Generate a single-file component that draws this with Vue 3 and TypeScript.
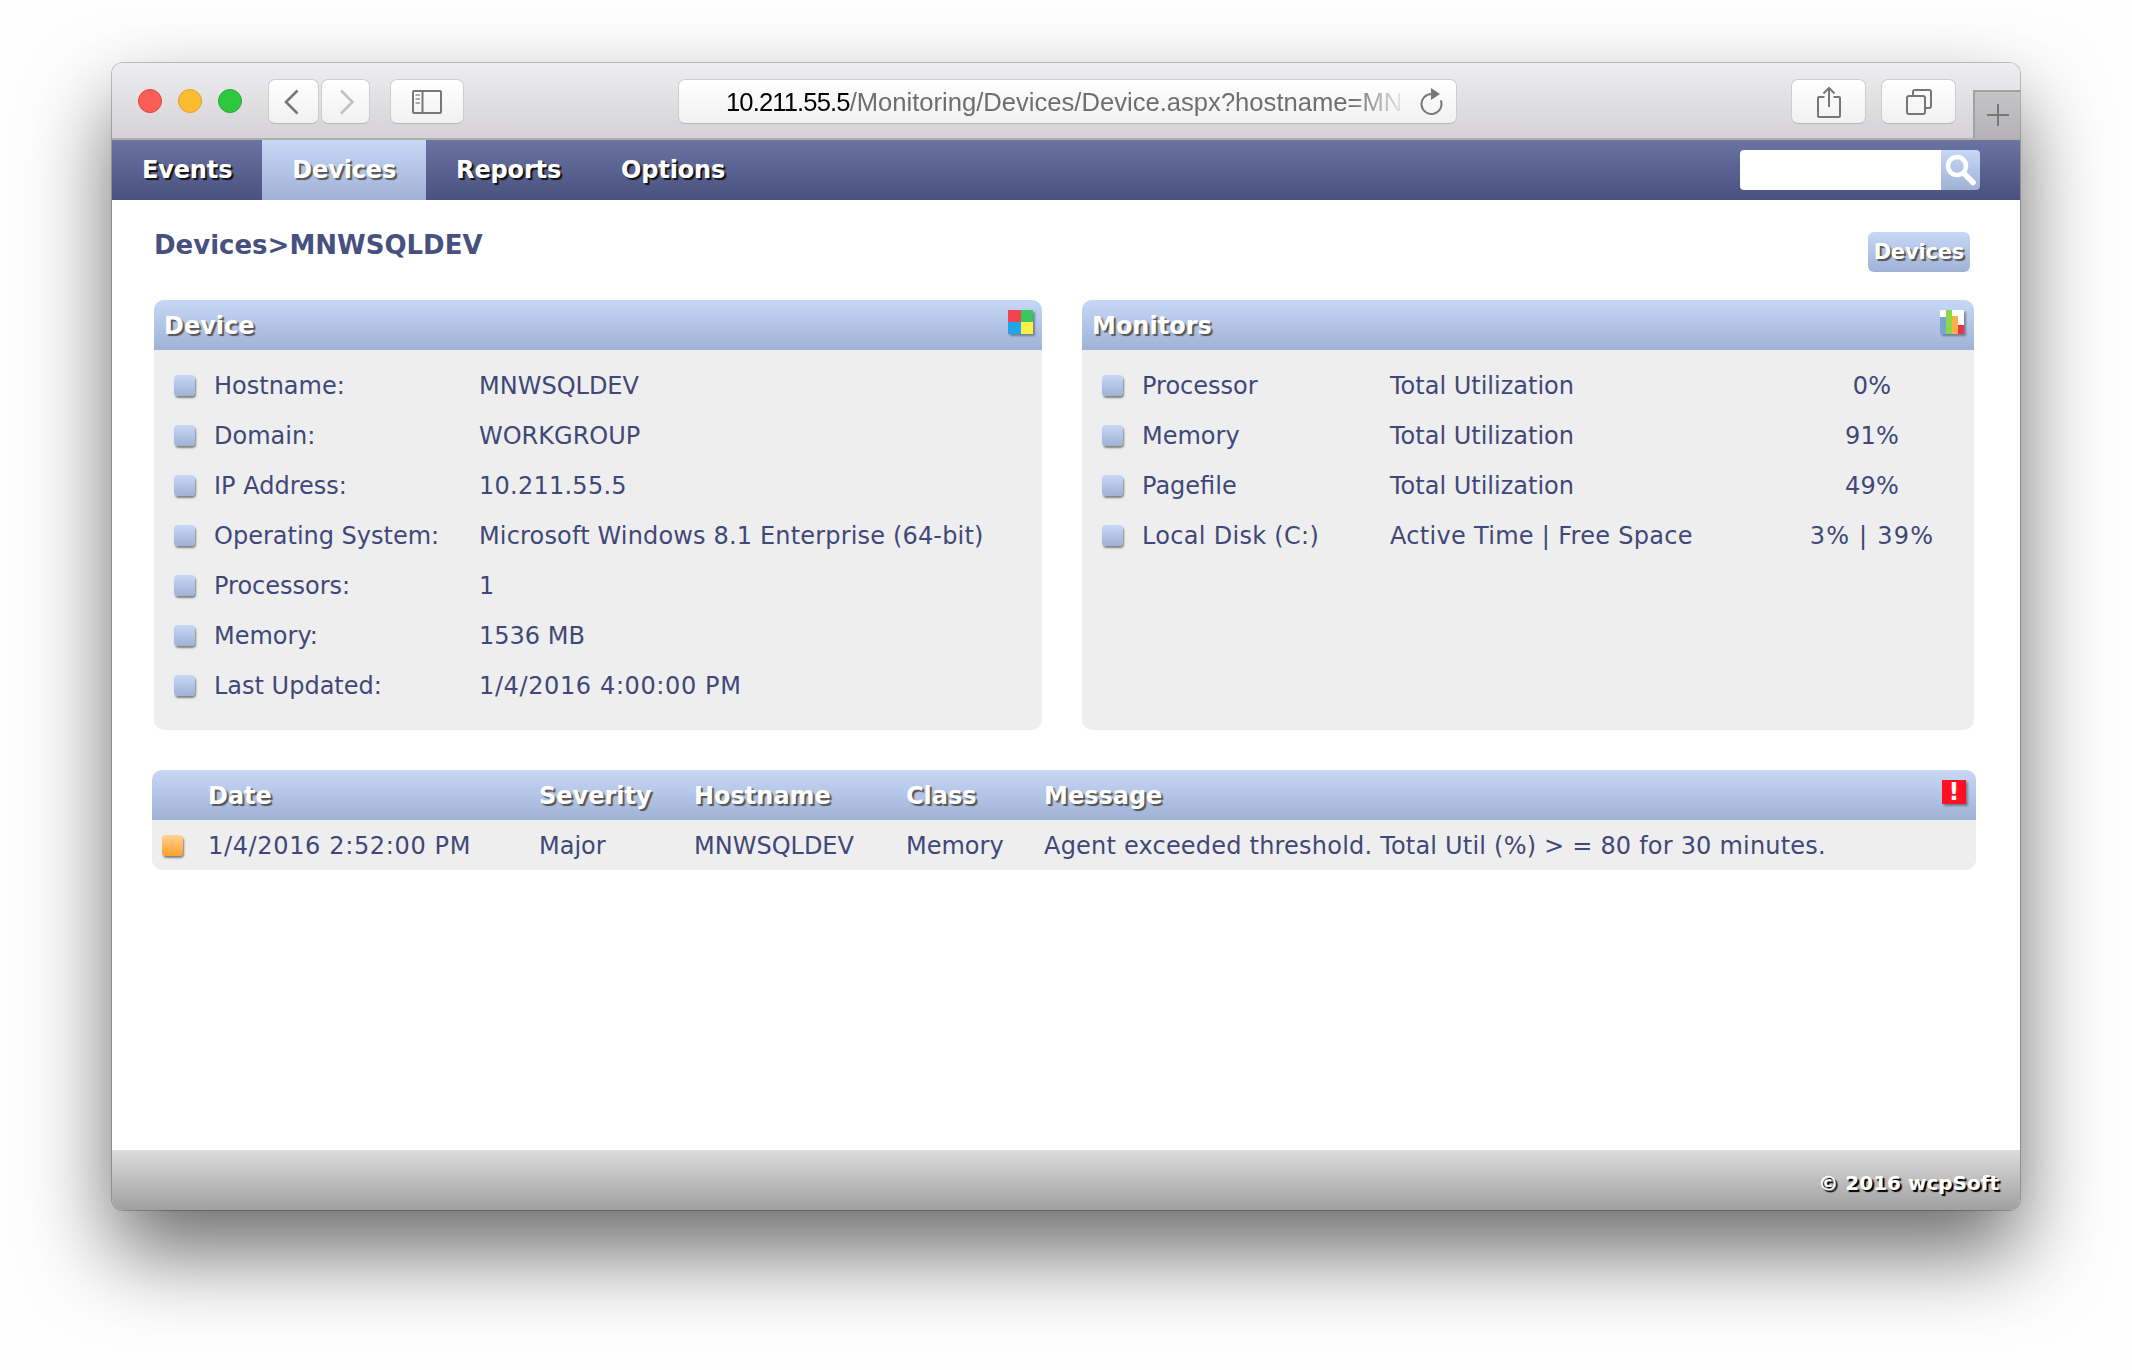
<template>
  <div class="page">
    <div class="window">
      <header class="titlebar">
        <div class="lights">
          <span class="light red"></span>
          <span class="light yellow"></span>
          <span class="light green"></span>
        </div>
        <div class="nav-btns">
          <button class="tb-btn nav-btn">
            <svg class="back" width="16" height="26" viewBox="0 0 16 26"><path d="M14.500 1.500 3 13 14.500 24.500" fill="none" stroke="#777" stroke-width="2.600" /></svg>
          </button>
          <button class="tb-btn nav-btn next">
            <svg class="fwd" width="16" height="26" viewBox="0 0 16 26"><path d="M2 1.500 13.500 13 2 24.500" fill="none" stroke="#c2c2c2" stroke-width="2.600" /></svg>
          </button>
        </div>
        <button class="tb-btn sidebar-btn">
          <svg width="30" height="24" viewBox="0 0 30 24">
            <rect x="1" y="1" width="28" height="22" rx="1" fill="none" stroke="#777" stroke-width="2" />
            <path d="M10.500 1v22" stroke="#777" stroke-width="2" />
            <path d="M3.500 5h4.500M3.500 9h4.500M3.500 13h4.500" stroke="#aaa" stroke-width="2" />
          </svg>
        </button>
        <div class="urlbar">
          <span class="url"><b>10.211.55.5</b>/Monitoring/Devices/Device.aspx?hostname=MN</span>
          <svg class="reload" width="24" height="28" viewBox="0 0 24 28">
            <path d="M11.500 6A10 10 0 1 0 20.800 12.400" fill="none" stroke="#777" stroke-width="2" />
            <path d="M11 0 20 6 11 12z" fill="#777" />
          </svg>
        </div>
        <button class="tb-btn tool-btn share">
          <svg width="24" height="32" viewBox="0 0 24 32">
            <path d="M7.500 11H2a1 1 0 0 0-1 1v18a1 1 0 0 0 1 1h20a1 1 0 0 0 1-1V12a1 1 0 0 0-1-1h-5.500" fill="none" stroke="#777" stroke-width="2" />
            <path d="M12 2v19M6.500 7.500 12 2l5.500 5.500" fill="none" stroke="#777" stroke-width="2" />
          </svg>
        </button>
        <button class="tb-btn tool-btn tabs">
          <svg width="26" height="26" viewBox="0 0 26 26">
            <rect x="1" y="7" width="18" height="18" rx="2" fill="none" stroke="#777" stroke-width="2" />
            <path d="M7 7V3a2 2 0 0 1 2-2h14a2 2 0 0 1 2 2v14a2 2 0 0 1-2 2h-4" fill="none" stroke="#777" stroke-width="2" />
          </svg>
        </button>
        <div class="newtab">
          <svg width="24" height="24" viewBox="0 0 24 24"><path d="M12 1v22M1 12h22" stroke="#777" stroke-width="2" /></svg>
        </div>
      </header>

      <nav class="menubar">
        <a v-for="item in menu" :key="item" class="menu-item" :class="{ active: item === 'Devices' }">{{ item }}</a>
        <div class="search">
          <div class="search-input"></div>
          <div class="search-btn">
            <svg width="31" height="32" viewBox="0 0 31 32">
              <circle cx="12" cy="12" r="9" fill="none" stroke="#fff" stroke-width="4.500" />
              <path d="M18.500 19 28 28.500" stroke="#fff" stroke-width="5.500" stroke-linecap="round" />
            </svg>
          </div>
        </div>
      </nav>

      <main class="content">
        <div class="title-row">
          <h1 class="crumb">Devices&gt;MNWSQLDEV</h1>
          <a class="devices-btn">Devices</a>
        </div>

        <div class="panels">
          <section class="panel device">
            <div class="head">
              <span>Device</span>
              <span class="quad">
                <i style="background: #f2444f"></i><i style="background: #35c95c"></i>
                <i style="background: #1ea6e8"></i><i style="background: #ffee45"></i>
              </span>
            </div>
            <div class="body">
              <div v-for="row in deviceRows" :key="row.label" class="row device-row">
                <span class="bullet"></span>
                <span>{{ row.label }}</span>
                <span :style="{ letterSpacing: row.track }">{{ row.value }}</span>
              </div>
            </div>
          </section>

          <section class="panel monitors">
            <div class="head">
              <span>Monitors</span>
              <span class="bars">
                <i style="height: 17px; background: #78a5d2"></i>
                <i style="height: 24px; background: #8cd846"></i>
                <i style="height: 18px; background: #fcb04a"></i>
                <i style="height: 9px; background: #ef3340"></i>
              </span>
            </div>
            <div class="body">
              <div v-for="row in monitorRows" :key="row.name" class="row monitor-row">
                <span class="bullet"></span>
                <span :style="{ letterSpacing: row.track }">{{ row.name }}</span>
                <span :style="{ letterSpacing: row.track }">{{ row.metric }}</span>
                <span class="val" :style="{ letterSpacing: row.valTrack }">{{ row.value }}</span>
              </div>
            </div>
          </section>
        </div>

        <section class="events">
          <div class="head event-grid">
            <span></span>
            <span>Date</span>
            <span>Severity</span>
            <span>Hostname</span>
            <span>Class</span>
            <span>Message</span>
            <span class="alert">!</span>
          </div>
          <div class="event-grid event-row">
            <span class="bullet major"></span>
            <span class="date">1/4/2016 2:52:00 PM</span>
            <span>Major</span>
            <span>MNWSQLDEV</span>
            <span>Memory</span>
            <span class="msg">Agent exceeded threshold. Total Util (%) &gt; = 80 for 30 minutes.</span>
          </div>
        </section>
      </main>

      <footer class="footer">© 2016 wcpSoft</footer>
    </div>
  </div>
</template>

<script setup lang="ts">
interface DeviceRow {
  label: string;
  value: string;
  track?: string;
}

interface MonitorRow {
  name: string;
  metric: string;
  value: string;
  track?: string;
  valTrack?: string;
}

const menu: string[] = ["Events", "Devices", "Reports", "Options"];

const deviceRows: DeviceRow[] = [
  { label: "Hostname:", value: "MNWSQLDEV" },
  { label: "Domain:", value: "WORKGROUP" },
  { label: "IP Address:", value: "10.211.55.5", track: "0.25px" },
  { label: "Operating System:", value: "Microsoft Windows 8.1 Enterprise (64-bit)", track: "0.165px" },
  { label: "Processors:", value: "1" },
  { label: "Memory:", value: "1536 MB" },
  { label: "Last Updated:", value: "1/4/2016 4:00:00 PM", track: "0.62px" },
];

const monitorRows: MonitorRow[] = [
  { name: "Processor", metric: "Total Utilization", value: "0%", valTrack: "0.3px" },
  { name: "Memory", metric: "Total Utilization", value: "91%", valTrack: "0.3px" },
  { name: "Pagefile", metric: "Total Utilization", value: "49%", valTrack: "0.3px" },
  { name: "Local Disk (C:)", metric: "Active Time | Free Space", value: "3% | 39%", track: "0.3px", valTrack: "1.2px" },
];
</script>

<style>
html,
body {
  margin: 0;
  background: #fefefe;
}
</style>

<style scoped>
.page {
  width: 2132px;
  height: 1370px;
  padding: 63px 0 0 112px;
  box-sizing: border-box;
  overflow: hidden;
  font-family: "DejaVu Sans", Verdana, sans-serif;
  color: #3f4878;
}

.window {
  width: 1908px;
  height: 1147px;
  display: flex;
  flex-direction: column;
  background: #fff;
  border-radius: 11px;
  overflow: hidden;
  box-shadow: 0 0 0 1px rgba(0, 0, 0, 0.22), 0 42px 85px rgba(0, 0, 0, 0.58);
}

/* toolbar */
.titlebar {
  height: 77px;
  flex-shrink: 0;
  display: flex;
  align-items: flex-start;
  box-sizing: border-box;
  padding: 16px 0 0 26px;
  background: linear-gradient(#eeedef, #d4d2d5);
  border-bottom: 2px solid #b1adad;
}

.lights {
  display: flex;
  gap: 16px;
  margin-top: 10px;
}

.light {
  width: 24px;
  height: 24px;
  border-radius: 50%;
  box-sizing: border-box;
}
.red {
  background: #fc5e57;
  border: 1px solid #e0443e;
}
.yellow {
  background: #fdbc2f;
  border: 1px solid #de9f34;
}
.green {
  background: #2ec83f;
  border: 1px solid #27aa35;
}

.tb-btn {
  height: 45px;
  padding: 0;
  display: flex;
  align-items: center;
  justify-content: center;
  box-sizing: border-box;
  background: linear-gradient(#fff, #f1f1f1);
  border: 1px solid #cfcccf;
  border-bottom-color: #b9b6b9;
  border-radius: 7px;
}

.nav-btns {
  display: flex;
  gap: 2px;
  margin-left: 26px;
}
.nav-btn {
  width: 51px;
}
.nav-btn.next {
  width: 49px;
}
.back {
  margin-right: 5px;
}
.fwd {
  margin-left: 3px;
}

.sidebar-btn {
  width: 74px;
  margin-left: 20px;
}

.urlbar {
  width: 779px;
  height: 45px;
  margin-left: 214px;
  box-sizing: border-box;
  display: flex;
  align-items: center;
  background: linear-gradient(#fff, #f1f1f1);
  border: 1px solid #cfcccf;
  border-bottom-color: #b9b6b9;
  border-radius: 7px;
  font-family: "Liberation Sans", Arial, sans-serif;
  font-size: 25.6px;
  color: #6f6f6f;
}

.url {
  width: 674px;
  margin-left: 47px;
  padding-top: 2px;
  white-space: nowrap;
  overflow: hidden;
  -webkit-mask-image: linear-gradient(90deg, #000 93%, rgba(0, 0, 0, 0.15));
  mask-image: linear-gradient(90deg, #000 93%, rgba(0, 0, 0, 0.15));
}
.url b {
  font-weight: 400;
  letter-spacing: -0.88px;
  color: #000;
}

.reload {
  margin-left: 20px;
}

.tool-btn {
  width: 75px;
}
.share {
  margin-left: 334px;
}
.tabs {
  margin-left: 15px;
}

.newtab {
  width: 47px;
  height: 48px;
  margin: 11px 0 0 17px;
  box-sizing: border-box;
  display: flex;
  align-items: center;
  justify-content: center;
  background: linear-gradient(#c4c3c5, #b5b3b5);
  border-top: 2px solid #a3a2a3;
  border-left: 2px solid #a3a2a3;
}

/* menu */
.menubar {
  height: 60px;
  flex-shrink: 0;
  display: flex;
  background: linear-gradient(#6a73a1, #495180);
}

.menu-item {
  height: 60px;
  padding: 0 30px;
  display: flex;
  align-items: center;
  font-size: 24px;
  font-weight: 700;
  letter-spacing: -0.15px;
  color: #fff;
  text-shadow: 2px 2px 1px #111;
}
.menu-item.active {
  background: linear-gradient(#c7d8f6, #9fb2d5);
  text-shadow: 2px 2px 1px #555;
}

.search {
  margin: 10px 40px 0 auto;
  width: 240px;
  height: 40px;
  display: flex;
}
.search-input {
  flex: 1;
  background: #fff;
  border-radius: 4px 0 0 4px;
}
.search-btn {
  width: 39px;
  display: flex;
  align-items: center;
  justify-content: center;
  background: linear-gradient(#c7d8f6, #9fb2d5);
  border-radius: 0 4px 4px 0;
}

/* content */
.content {
  flex: 1;
  padding: 0 44px 0 40px;
}

.title-row {
  height: 100px;
  display: flex;
  justify-content: space-between;
  align-items: flex-start;
  padding: 0 6px 0 2px;
}

.crumb {
  margin: 25px 0 0;
  font-size: 26px;
  line-height: 40px;
  font-weight: 700;
  color: #47507f;
}

.devices-btn {
  margin-top: 32px;
  height: 40px;
  padding: 0 6px;
  display: flex;
  align-items: center;
  font-size: 21px;
  font-weight: 700;
  letter-spacing: -0.2px;
  color: #fff;
  text-shadow: 2px 2px 1px #555;
  border-radius: 6px;
  background: linear-gradient(#c7d8f6, #9fb2d5);
}

.panels {
  display: flex;
  gap: 40px;
  padding: 0 2px;
}

.panel {
  height: 430px;
  background: #eee;
  border-radius: 10px;
  overflow: hidden;
}
.device {
  width: 888px;
}
.monitors {
  width: 892px;
}

.head {
  height: 50px;
  display: flex;
  align-items: center;
  justify-content: space-between;
  padding: 0 20px 0 10px;
  box-sizing: border-box;
  background: linear-gradient(#c7d8f6, #9fb2d5);
  font-size: 24px;
  font-weight: 700;
  color: #fff;
  text-shadow: 2px 2px 1px #555;
}
.head > span:first-child {
  padding-top: 2px;
}

.quad {
  width: 25px;
  height: 24px;
  margin-top: -6px;
  margin-right: -11px;
  display: grid;
  grid-template-columns: 1fr 1fr;
  box-shadow: 2px 2px 2px rgba(0, 0, 0, 0.35);
}
.quad i,
.bars i {
  display: block;
}

.bars {
  width: 24px;
  height: 24px;
  margin-top: -6px;
  margin-right: -10px;
  display: flex;
  align-items: flex-end;
  background: #fff;
  box-shadow: 2px 2px 2px rgba(0, 0, 0, 0.35);
}
.bars i {
  flex: 1;
}

.body {
  padding-top: 10px;
  font-size: 24px;
}

.row {
  height: 50px;
  display: grid;
  align-items: center;
  padding-left: 20px;
  white-space: nowrap;
}
.row > span:not(.bullet),
.event-row > span:not(.bullet) {
  padding-top: 2px;
}
.device-row {
  grid-template-columns: 40px 265px 1fr;
}
.monitor-row {
  grid-template-columns: 40px 248px 408px 148px;
}
.val {
  text-align: center;
}

.bullet {
  width: 21px;
  height: 21px;
  border-radius: 4px;
  background: linear-gradient(#c7d8f6, #9fb2d5);
  box-shadow: 1px 2px 2px rgba(0, 0, 0, 0.45);
}
.bullet.major {
  background: linear-gradient(#ffd28f, #fda02e);
}

.events {
  margin-top: 40px;
  background: #eee;
  border-radius: 10px;
  overflow: hidden;
}

.event-grid {
  display: grid;
  grid-template-columns: 46px 331px 155px 212px 138px 1fr 24px;
  align-items: center;
  justify-content: stretch;
  padding: 0 10px;
  white-space: nowrap;
}
.head.event-grid > span {
  padding-top: 2px;
}
.event-row {
  height: 50px;
  font-size: 24px;
}
.date {
  letter-spacing: 0.65px;
}
.msg {
  letter-spacing: 0.21px;
}

.head.event-grid > .alert {
  width: 24px;
  height: 24px;
  margin-top: -6px;
  padding-top: 0;
  font-size: 24px;
  line-height: 24px;
  text-align: center;
  color: #fff;
  text-shadow: none;
  background: #ff1020;
  box-shadow: 2px 2px 2px rgba(0, 0, 0, 0.35);
}

.footer {
  height: 60px;
  flex-shrink: 0;
  box-sizing: border-box;
  padding: 21px 21px 0 0;
  text-align: right;
  background: linear-gradient(#dcdcdc, #a0a0a0);
  font-size: 20px;
  font-weight: 700;
  color: #fff;
  text-shadow: 2px 2px 1px #000;
}
</style>
